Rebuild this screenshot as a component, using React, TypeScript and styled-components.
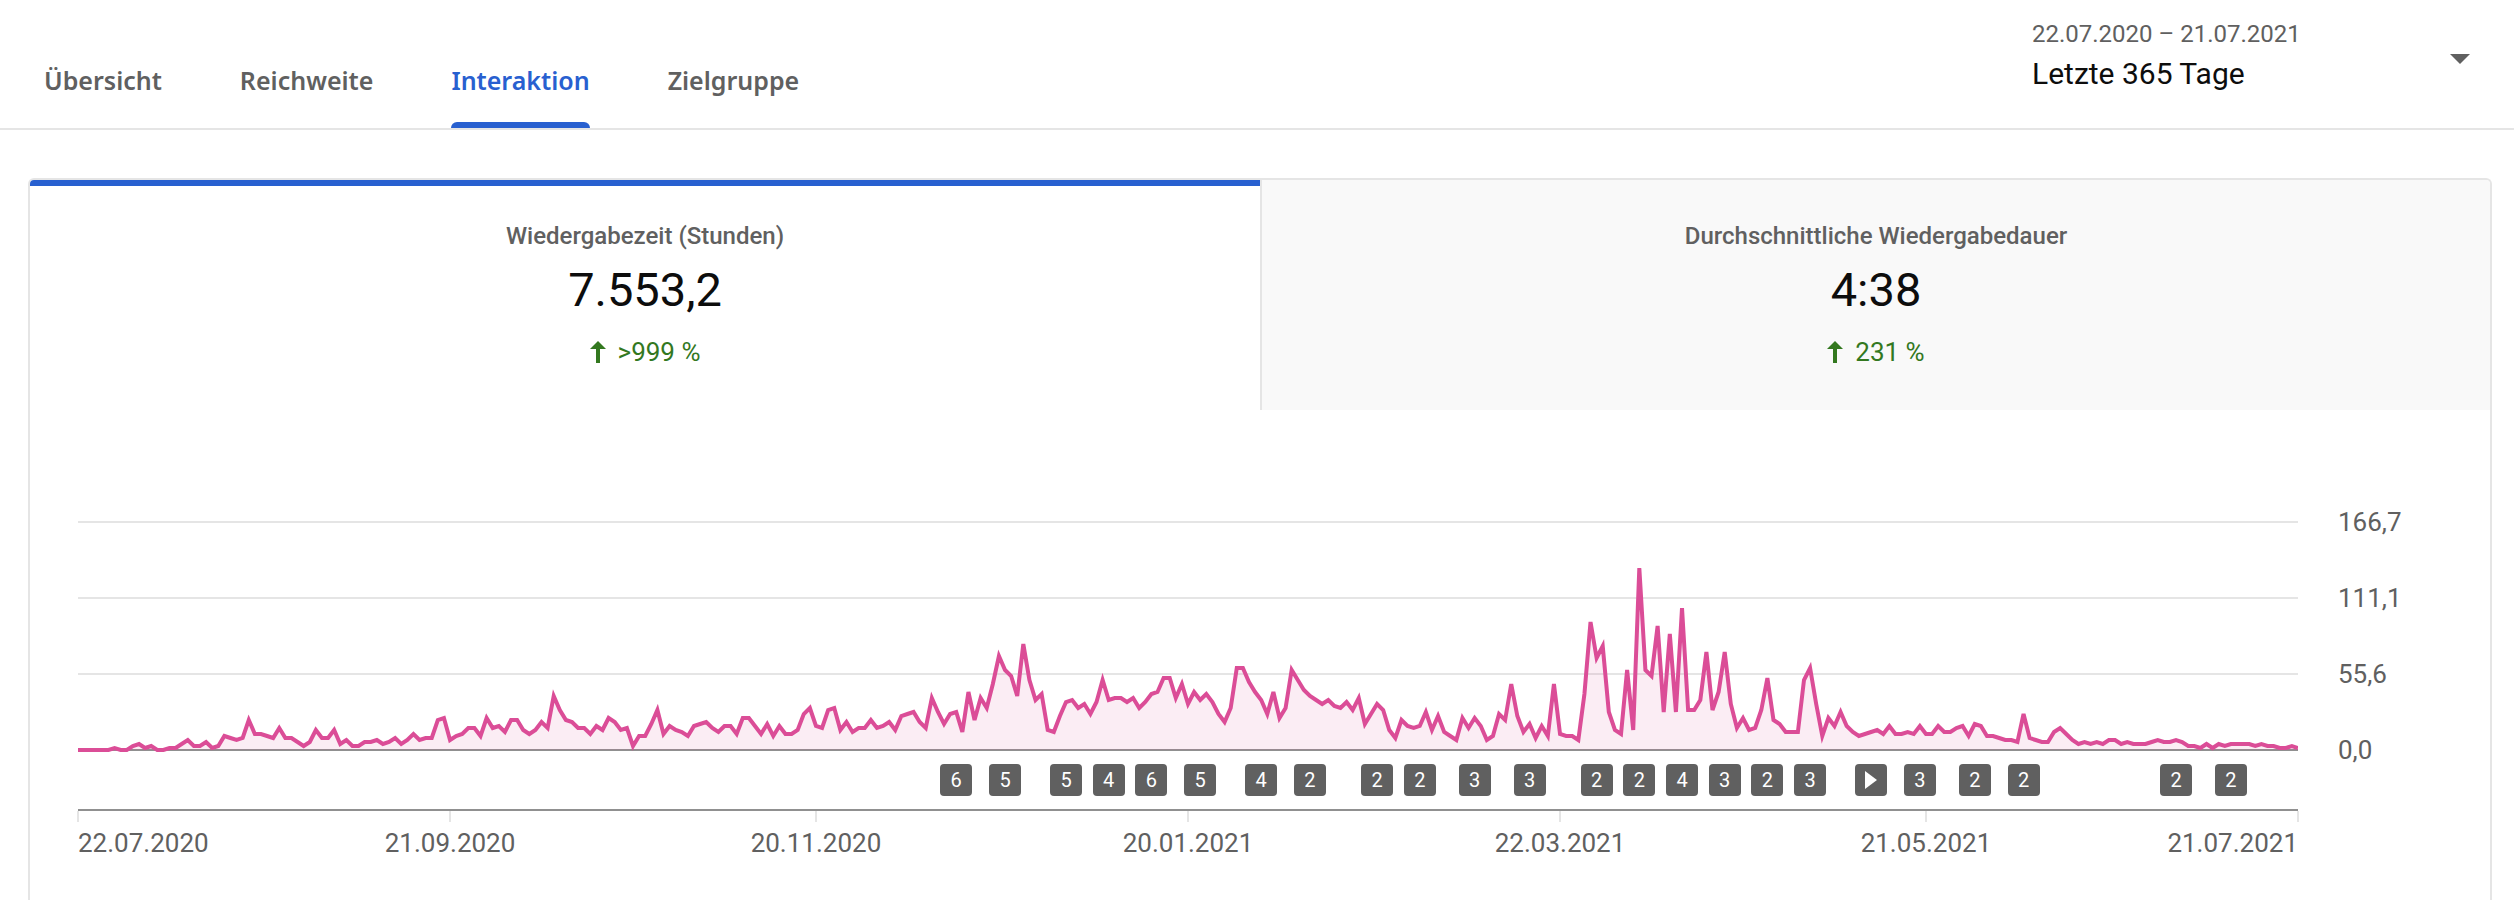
import React from "react";
import styled, { createGlobalStyle } from "styled-components";

const color = {
  text: "#0d0d0d",
  muted: "#606060",
  accent: "#2860d0",
  positive: "#33781f",
  line: "#e5e5e5",
  axis: "#909090",
  series: "#db4d97",
  panel: "#f9f9f9",
};

const GlobalStyle = createGlobalStyle`
  *, *::before, *::after { box-sizing: border-box; }
  body {
    margin: 0;
    background: #fff;
    color: ${color.text};
    font-family: Roboto, "Liberation Sans", sans-serif;
  }
  button { font: inherit; color: inherit; }
`;

const Page = styled.div`
  display: flex;
  flex-direction: column;
  min-height: 100vh;
`;

const Header = styled.header`
  display: flex;
  justify-content: space-between;
  align-items: stretch;
  border-bottom: 2px solid ${color.line};
`;

const Tabs = styled.nav`
  display: flex;
  gap: 78px;
  padding-left: 44px;
`;

const Tab = styled.a<{ $active?: boolean }>`
  position: relative;
  display: flex;
  align-items: flex-end;
  padding-bottom: 30px;
  font-family: "Noto Sans", "Open Sans", sans-serif;
  font-size: 25px;
  font-weight: 600;
  line-height: 36px;
  text-decoration: none;
  color: ${(p) => (p.$active ? color.accent : color.muted)};

  &::after {
    content: "";
    position: absolute;
    inset: auto 0 0;
    height: 6px;
    border-radius: 6px 6px 0 0;
    background: ${(p) => (p.$active ? color.accent : "transparent")};
  }
`;

const PeriodButton = styled.button`
  display: flex;
  justify-content: space-between;
  align-items: center;
  width: 482px;
  padding: 18px 44px 34px 0;
  border: 0;
  background: none;
  text-align: left;
`;

const PeriodText = styled.span`
  display: flex;
  flex-direction: column;
  gap: 4px;
`;

const PeriodRange = styled.span`
  font-size: 24px;
  line-height: 32px;
  color: ${color.muted};
`;

const PeriodName = styled.span`
  font-size: 30px;
  line-height: 40px;
`;

const Caret = styled.svg`
  width: 20px;
  height: 10px;
  margin-top: 6px;
  fill: ${color.muted};
`;

const Card = styled.main`
  flex: 1;
  display: flex;
  flex-direction: column;
  margin: 48px 22px 0 28px;
  border: 2px solid ${color.line};
  border-bottom: 0;
  border-radius: 6px 6px 0 0;
  overflow: hidden;
`;

const Metrics = styled.div`
  display: grid;
  grid-template-columns: 1fr 1fr;
`;

const MetricButton = styled.button<{ $selected?: boolean }>`
  display: flex;
  flex-direction: column;
  align-items: center;
  padding: ${(p) => (p.$selected ? "34px" : "40px")} 24px 42px;
  border: 0 solid;
  border-width: ${(p) => (p.$selected ? "6px 0 0" : "0 0 0 2px")};
  border-color: ${(p) => (p.$selected ? color.accent : color.line)};
  background: ${(p) => (p.$selected ? "#fff" : color.panel)};
`;

const MetricLabel = styled.span`
  font-size: 24px;
  font-weight: 500;
  line-height: 32px;
  color: ${color.muted};
`;

const MetricValue = styled.span`
  margin-top: 10px;
  font-size: 47px;
  line-height: 56px;
`;

const MetricChange = styled.span`
  display: flex;
  align-items: center;
  gap: 12px;
  margin-top: 18px;
  font-size: 26px;
  line-height: 32px;
  color: ${color.positive};
`;

const UpArrow = styled.svg`
  width: 16px;
  height: 22px;
  fill: currentColor;
`;

const Chart = styled.section`
  display: flex;
  padding: 74px 0 0 48px;
`;

const PlotColumn = styled.div`
  flex: 1;
  min-width: 0;
  padding-top: 32px;
`;

const Plot = styled.svg`
  display: block;
  width: 100%;
  height: 240px;

  line, polyline { vector-effect: non-scaling-stroke; stroke-width: 2px; }
  polyline { fill: none; stroke: ${color.series}; stroke-width: 4px; }
  polygon { fill: ${color.series}; fill-opacity: 0.1; }
`;

const MarkerTrack = styled.div`
  position: relative;
  height: 32px;
  margin: 8px 0 13px;
`;

const Marker = styled.button`
  position: absolute;
  display: grid;
  place-items: center;
  width: 32px;
  height: 32px;
  padding: 0;
  border: 0;
  border-radius: 4px;
  background: ${color.muted};
  color: #fff;
  font-size: 20px;
  line-height: 32px;
  transform: translateX(-50%);
`;

const PlayIcon = styled.svg`
  width: 12px;
  height: 18px;
  fill: currentColor;
`;

const TimeAxis = styled.div`
  position: relative;
  height: 60px;
  border-top: 2px solid ${color.axis};
`;

const TickLine = styled.span`
  position: absolute;
  width: 2px;
  height: 11px;
  margin-left: -1px;
  background: ${color.line};
`;

const TickLabel = styled.span<{ $align: "start" | "middle" | "end" }>`
  position: absolute;
  top: 16px;
  font-size: 26px;
  line-height: 32px;
  white-space: nowrap;
  color: ${color.muted};
  transform: translateX(
    ${(p) => ({ start: "0", middle: "-50%", end: "-100%" })[p.$align]}
  );
`;

const ValueAxis = styled.div`
  width: 192px;
  padding-left: 40px;
  font-size: 26px;
  line-height: 76px;
  color: ${color.muted};
`;

const TABS = ["Übersicht", "Reichweite", "Interaktion", "Zielgruppe"];

const METRICS = [
  { label: "Wiedergabezeit (Stunden)", value: "7.553,2", change: ">999 %" },
  { label: "Durchschnittliche Wiedergabedauer", value: "4:38", change: "231 %" },
];

const VALUE_LABELS = ["166,7", "111,1", "55,6", "0,0"];

const TICKS = [
  { day: 0, label: "22.07.2020" },
  { day: 61, label: "21.09.2020" },
  { day: 121, label: "20.11.2020" },
  { day: 182, label: "20.01.2021" },
  { day: 243, label: "22.03.2021" },
  { day: 303, label: "21.05.2021" },
  { day: 364, label: "21.07.2021" },
];

/* Published videos: day of the period and how many (1 shows a play icon). */
const MARKERS: [number, number][] = [
  [144, 6], [152, 5], [162, 5], [169, 4], [176, 6], [184, 5], [194, 4],
  [202, 2], [213, 2], [220, 2], [229, 3], [238, 3], [249, 2], [256, 2],
  [263, 4], [270, 3], [277, 2], [284, 3], [294, 1], [302, 3], [311, 2],
  [319, 2], [344, 2], [353, 2],
];

/* Daily watch time, one entry per day; 228 units equal 166,7 hours. */
const SERIES = [
  0, 0, 0, 0, 0, 0, 2, 0, 0, 4,
  6, 2, 4, 0, 0, 2, 2, 6, 10, 4,
  4, 8, 2, 4, 14, 12, 10, 12, 30, 16,
  16, 14, 12, 22, 12, 12, 8, 4, 8, 20,
  12, 12, 20, 6, 10, 4, 4, 8, 8, 10,
  6, 8, 12, 6, 10, 16, 10, 12, 12, 30,
  32, 10, 14, 16, 22, 22, 14, 32, 22, 24,
  18, 30, 30, 20, 16, 20, 28, 22, 54, 40,
  30, 28, 22, 22, 16, 24, 20, 32, 28, 20,
  22, 4, 14, 14, 26, 40, 16, 24, 20, 18,
  14, 24, 26, 28, 22, 18, 24, 24, 16, 32,
  32, 24, 16, 26, 14, 24, 16, 16, 20, 36,
  42, 24, 22, 40, 42, 20, 28, 18, 22, 22,
  30, 22, 24, 28, 20, 34, 36, 38, 28, 22,
  52, 38, 26, 36, 38, 18, 58, 30, 52, 42,
  66, 94, 80, 74, 54, 106, 70, 50, 56, 20,
  18, 34, 48, 50, 42, 46, 36, 48, 70, 50,
  52, 52, 48, 52, 42, 48, 56, 58, 72, 72,
  52, 66, 46, 58, 50, 56, 48, 36, 28, 42,
  82, 82, 68, 58, 50, 36, 58, 32, 42, 80,
  70, 60, 54, 50, 46, 50, 44, 42, 48, 40,
  52, 26, 36, 46, 40, 20, 12, 30, 24, 22,
  24, 38, 20, 34, 18, 14, 10, 32, 22, 32,
  24, 10, 14, 36, 30, 66, 34, 18, 26, 12,
  24, 14, 66, 16, 14, 14, 10, 56, 128, 92,
  104, 38, 20, 16, 80, 20, 182, 80, 74, 124,
  38, 116, 38, 142, 40, 40, 50, 98, 40, 58,
  98, 46, 22, 32, 20, 22, 40, 72, 30, 26,
  18, 18, 18, 70, 82, 46, 14, 32, 24, 38,
  24, 18, 14, 16, 18, 20, 16, 24, 16, 16,
  18, 16, 24, 16, 16, 24, 18, 18, 22, 24,
  14, 26, 24, 14, 14, 12, 10, 10, 8, 36,
  12, 10, 8, 8, 18, 22, 16, 10, 6, 8,
  6, 8, 6, 10, 10, 6, 8, 6, 6, 6,
  8, 10, 8, 8, 10, 8, 4, 4, 2, 6,
  2, 6, 4, 6, 6, 6, 6, 4, 6, 4,
  4, 2, 2, 4, 2,
];

const LAST_DAY = SERIES.length - 1;
const BASELINE = 234;
const GRID_STEP = 76;

const left = (day: number) => ({ left: `${(day / LAST_DAY) * 100}%` });

function WatchTimePlot() {
  const points = SERIES.map((v, day) => `${day},${BASELINE - v}`).join(" ");
  return (
    <Plot
      viewBox={`0 0 ${LAST_DAY} 240`}
      preserveAspectRatio="none"
      role="img"
      aria-label="Wiedergabezeit (Stunden)"
    >
      {[3, 2, 1].map((i) => (
        <line
          key={i}
          x1={0}
          x2={LAST_DAY}
          y1={BASELINE - i * GRID_STEP}
          y2={BASELINE - i * GRID_STEP}
          stroke={color.line}
        />
      ))}
      <line x1={0} x2={LAST_DAY} y1={BASELINE} y2={BASELINE} stroke={color.axis} />
      <polygon points={`0,${BASELINE} ${points} ${LAST_DAY},${BASELINE}`} />
      <polyline points={points} />
    </Plot>
  );
}

export default function App() {
  return (
    <Page>
      <GlobalStyle />
      <Header>
        <Tabs>
          {TABS.map((tab) => (
            <Tab
              key={tab}
              href="#"
              $active={tab === "Interaktion"}
              aria-current={tab === "Interaktion" ? "page" : undefined}
            >
              {tab}
            </Tab>
          ))}
        </Tabs>
        <PeriodButton type="button" aria-haspopup="listbox">
          <PeriodText>
            <PeriodRange>22.07.2020 – 21.07.2021</PeriodRange>
            <PeriodName>Letzte 365 Tage</PeriodName>
          </PeriodText>
          <Caret viewBox="0 0 20 10" aria-hidden="true">
            <path d="M0 0h20L10 10z" />
          </Caret>
        </PeriodButton>
      </Header>

      <Card>
        <Metrics>
          {METRICS.map((m, i) => (
            <MetricButton
              key={m.label}
              type="button"
              $selected={i === 0}
              aria-pressed={i === 0}
            >
              <MetricLabel>{m.label}</MetricLabel>
              <MetricValue>{m.value}</MetricValue>
              <MetricChange>
                <UpArrow viewBox="0 0 16 22" aria-hidden="true">
                  <path d="M8 0l8 8h-6v14H6V8H0z" />
                </UpArrow>
                {m.change}
              </MetricChange>
            </MetricButton>
          ))}
        </Metrics>

        <Chart>
          <PlotColumn>
            <WatchTimePlot />
            <MarkerTrack>
              {MARKERS.map(([day, count]) => (
                <Marker
                  key={day}
                  type="button"
                  style={left(day)}
                  aria-label={`${count} Videos`}
                >
                  {count > 1 ? (
                    count
                  ) : (
                    <PlayIcon viewBox="0 0 12 18" aria-hidden="true">
                      <path d="M0 0l12 9L0 18z" />
                    </PlayIcon>
                  )}
                </Marker>
              ))}
            </MarkerTrack>
            <TimeAxis>
              {TICKS.map(({ day, label }) => (
                <React.Fragment key={day}>
                  <TickLine style={left(day)} />
                  <TickLabel
                    style={left(day)}
                    $align={day === 0 ? "start" : day === LAST_DAY ? "end" : "middle"}
                  >
                    {label}
                  </TickLabel>
                </React.Fragment>
              ))}
            </TimeAxis>
          </PlotColumn>
          <ValueAxis>
            {VALUE_LABELS.map((v) => (
              <div key={v}>{v}</div>
            ))}
          </ValueAxis>
        </Chart>
      </Card>
    </Page>
  );
}
